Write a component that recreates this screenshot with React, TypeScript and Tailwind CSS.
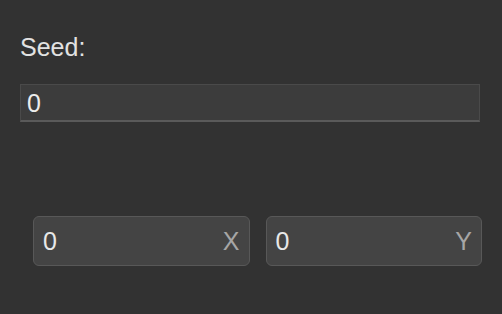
import React from "react";

function AxisField({ value, axis }: { value: string; axis: string }) {
  return (
    <div className="flex h-[50px] flex-1 items-center justify-between rounded-[6px] border border-[#585858] bg-[#444444] pl-[9px] pr-[9px]">
      <span className="text-[25px] leading-[28px] text-[#e8e8e8]">{value}</span>
      <span className="text-[25px] leading-[28px] text-[#a6a6a6]">{axis}</span>
    </div>
  );
}

export default function App() {
  return (
    <div
      className="flex h-[314px] w-[502px] flex-col bg-[#323232] pl-[20px] pr-[20px] pt-[33px]"
      style={{ fontFamily: '"Liberation Sans", Arial, sans-serif' }}
    >
      <label className="text-[25px] leading-[28px] text-[#e2e2e2]">Seed:</label>
      <div className="mr-[2px] mt-[23px] flex h-[38px] items-center border border-b-2 border-[#4a4a4a] border-b-[#5a5a5a] bg-[#3c3c3c] pl-[6px]">
        <span className="text-[25px] leading-[28px] text-[#ececec]">0</span>
      </div>
      <div className="mt-[94px] flex gap-[16px] pl-[13px]">
        <AxisField value="0" axis="X" />
        <AxisField value="0" axis="Y" />
      </div>
    </div>
  );
}
